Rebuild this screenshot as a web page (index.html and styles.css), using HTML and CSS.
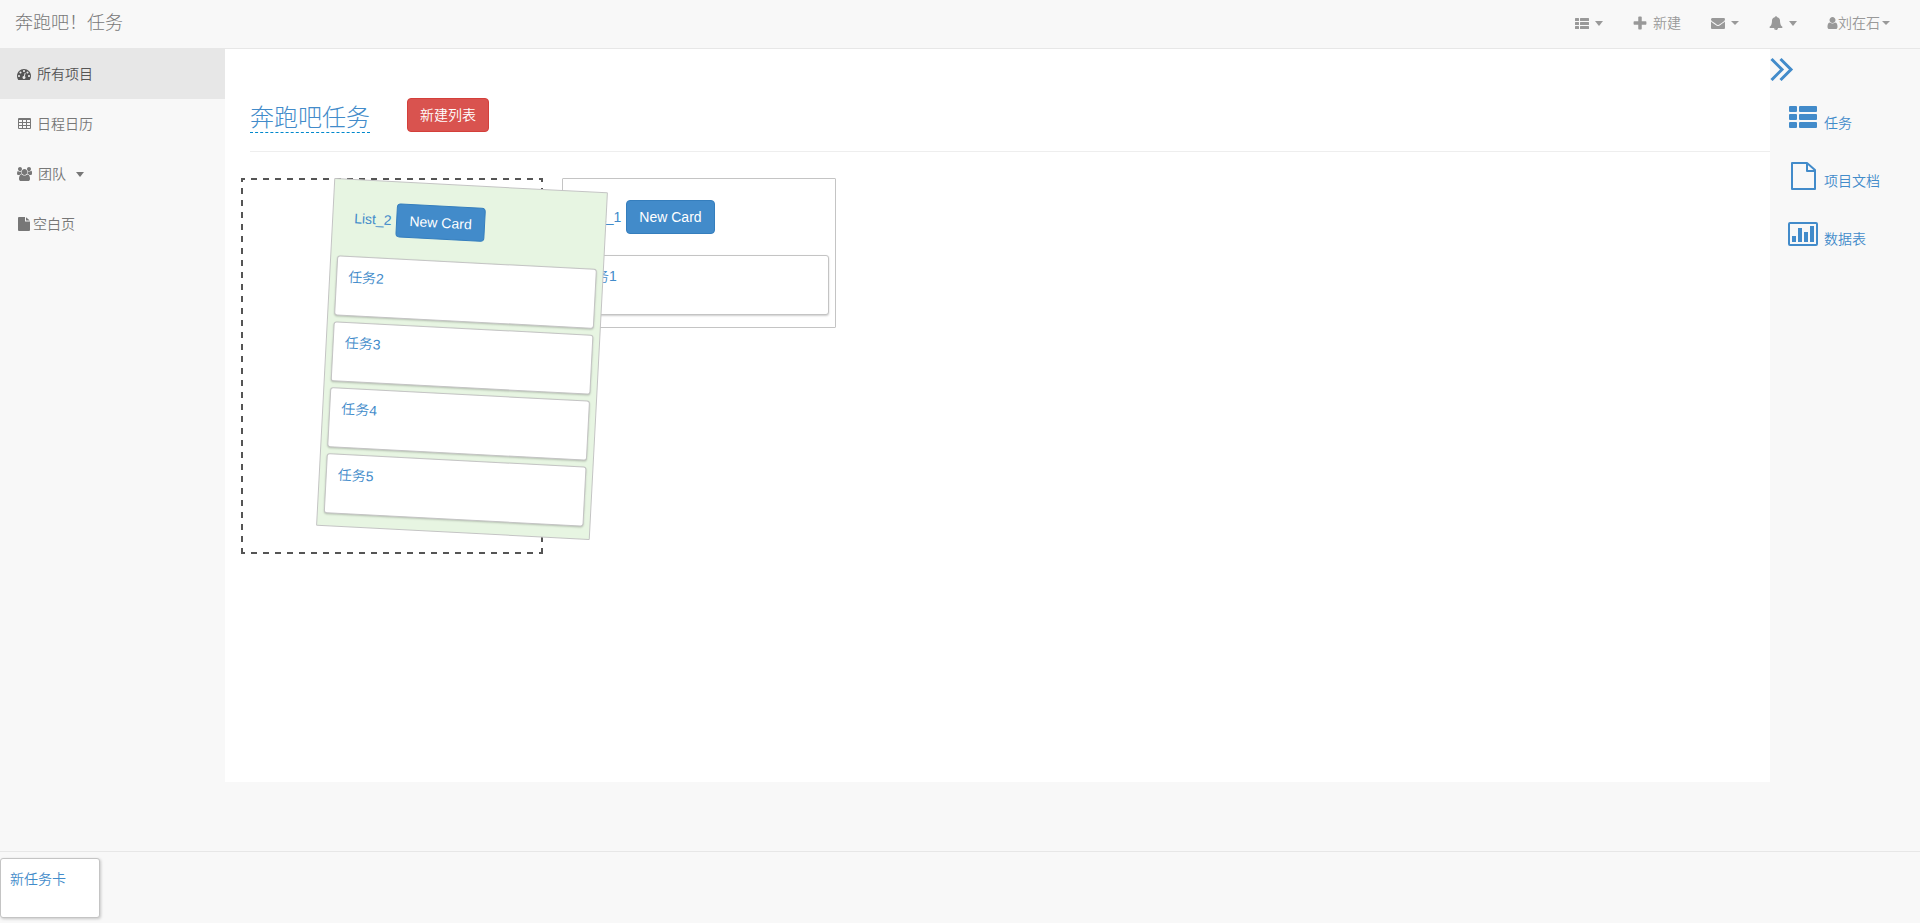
FILE: index.html
```html
<!DOCTYPE html>
<html lang="zh-CN">
<head>
<meta charset="utf-8">
<title>奔跑吧！任务</title>
<link rel="stylesheet" href="styles.css">
</head>
<body>
<svg class="sprite" aria-hidden="true">
  <symbol id="i-thlist" viewBox="0 0 28 22"><rect width="8" height="6" rx="1"/><rect x="10" width="18" height="6" rx="1"/><rect y="8" width="8" height="6" rx="1"/><rect x="10" y="8" width="18" height="6" rx="1"/><rect y="16" width="8" height="6" rx="1"/><rect x="10" y="16" width="18" height="6" rx="1"/></symbol>
  <symbol id="i-plus" viewBox="128 64 1536 1536"><path d="M1600 736v192q0 40-28 68t-68 28h-416v416q0 40-28 68t-68 28h-192q-40 0-68-28t-28-68v-416h-416q-40 0-68-28t-28-68v-192q0-40 28-68t68-28h416v-416q0-40 28-68t68-28h192q40 0 68 28t28 68v416h416q40 0 68 28t28 68z"/></symbol>
  <symbol id="i-mail" viewBox="0 0 1792 1792"><path d="M1792 710v794q0 66-47 113t-113 47h-1472q-66 0-113-47t-47-113v-794q44 49 101 87 362 246 497 345 57 42 92.500 65.500t94.500 48 110 24.500h2q51 0 110-24.500t94.500-48 92.500-65.500q170-123 498-345 57-39 100-87zm0-294q0 79-49 151t-122 123q-376 261-468 325-10 7-42.500 31t-54 38.500-52 32.500-57.500 27-50 9h-2q-23 0-50-9t-57.500-27-52-32.500-54-38.500-42.500-31q-91-64-262-182.500t-205-142.500q-62-42-117-115.500t-55-136.500q0-78 41.500-130t118.500-52h1472q65 0 112.500 47t47.500 113z"/></symbol>
  <symbol id="i-bell" viewBox="0 0 1792 1792"><path d="M912 1696q0-16-16-16-59 0-101.500-42.500t-42.500-101.500q0-16-16-16t-16 16q0 73 51.500 124.500t124.500 51.500q16 0 16-16zm816-288q0 52-38 90t-90 38h-448q0 106-75 181t-181 75-181-75-75-181h-448q-52 0-90-38t-38-90q50-42 91-88t85-119.500 74.500-158.500 50-206 19.500-260q0-152 117-282.500t307-158.500q-8-19-8-39 0-40 28-68t68-28 68 28 28 68q0 20-8 39 190 28 307 158.500t117 282.500q0 139 19.500 260t50 206 74.500 158.500 85 119.500 91 88z"/></symbol>
  <symbol id="i-user" viewBox="192 0 1408 1792"><path d="M1536 1399q0 109-62.500 187t-150.500 78h-854q-88 0-150.500-78t-62.500-187q0-85 8.500-160.500t31.500-152 58.500-131 94-89 134.500-34.500q131 128 313 128t313-128q76 0 134.500 34.500t94 89 58.500 131 31.500 152 8.500 160.500zm-256-887q0 159-112.500 271.500t-271.500 112.500-271.500-112.500-112.500-271.500 112.500-271.500 271.500-112.500 271.500 112.500 112.500 271.500z"/></symbol>
  <symbol id="i-dash" viewBox="0 0 1792 1792"><path d="M384 1152q0-53-37.500-90.500t-90.500-37.500-90.500 37.500-37.500 90.500 37.500 90.500 90.500 37.500 90.500-37.500 37.500-90.500zm192-448q0-53-37.500-90.500t-90.500-37.500-90.500 37.500-37.500 90.500 37.500 90.500 90.500 37.500 90.500-37.500 37.500-90.500zm428 481l101-382q6-26-7.500-48.500t-38.500-29.500-48 6.500-30 39.500l-101 382q-60 5-107 43.500t-63 98.500q-20 77 20 146t117 89 146-20 89-117q16-60-6-117t-72-91zm660-33q0-53-37.500-90.500t-90.500-37.500-90.500 37.500-37.500 90.500 37.500 90.500 90.500 37.500 90.500-37.500 37.500-90.500zm-640-640q0-53-37.500-90.500t-90.500-37.500-90.500 37.500-37.500 90.500 37.500 90.500 90.500 37.500 90.500-37.500 37.500-90.500zm448 192q0-53-37.500-90.500t-90.500-37.500-90.500 37.500-37.500 90.500 37.500 90.500 90.500 37.500 90.500-37.500 37.500-90.500zm320 448q0 261-141 483-19 29-54 29h-1402q-35 0-54-29-141-221-141-483 0-182 71-348t191-286 286-191 348-71 348 71 286 191 191 286 71 348z"/></symbol>
  <symbol id="i-table" viewBox="0 0 14 14"><path fill-rule="evenodd" d="M2 1h11q1 0 1 1v9q0 1-1 1H2q-1 0-1-1V2q0-1 1-1zM2 3v2h3V3zM6 3v2h3V3zM10 3v2h3V3zM2 6v2h3V6zM6 6v2h3V6zM10 6v2h3V6zM2 9v2h3V9zM6 9v2h3V9zM10 9v2h3V9z"/></symbol>
  <symbol id="i-users" viewBox="0 0 1920 1792"><path d="M593 896q-162 5-265 128h-134q-82 0-138-40.500t-56-118.500q0-353 124-353 6 0 43.500 21t97.500 42.500 119 21.500q67 0 133-23-5 37-5 66 0 159 93 293zm1071 637q0 120-73 189.500t-194 69.500h-874q-121 0-194-69.500t-73-189.500q0-53 3.500-103.500t14-109 26.500-108.500 43-97.500 62-81 85.500-53.500 111.500-20q10 0 43 21.500t73 48 107 48 135 21.500 135-21.500 107-48 73-48 43-21.500q61 0 111.500 20t85.500 53.500 62 81 43 97.500 26.500 108.500 14 109 3.500 103.500zm-1024-1277q0 106-75 181t-181 75-181-75-75-181 75-181 181-75 181 75 75 181zm704 384q0 159-112.500 271.500t-271.500 112.500-271.500-112.500-112.500-271.500 112.500-271.500 271.500-112.500 271.500 112.500 112.500 271.500zm576 225q0 78-56 118.500t-138 40.500h-134q-103-123-265-128 93-134 93-293 0-29-5-66 66 23 133 23 59 0 119-21.500t97.500-42.500 43.500-21q124 0 124 353zm-128-609q0 106-75 181t-181 75-181-75-75-181 75-181 181-75 181 75 75 181z"/></symbol>
  <symbol id="i-file" viewBox="0 0 14 14"><path d="M2 0H8V4.500H13V13q0 1-1 1H2q-1 0-1-1V1q0-1 1-1zM9 0.200L12.800 3.500H9z"/></symbol>
  <symbol id="i-doc" viewBox="0 0 28 28"><path fill="none" stroke="currentColor" stroke-width="2" stroke-linejoin="round" d="M4 1H18L26 8V27H3V1zM18 1V9H26"/></symbol>
  <symbol id="i-chart" viewBox="0 0 30 24"><rect x="1" y="1" width="28" height="22" rx="1" fill="none" stroke="currentColor" stroke-width="2"/><path d="M4 14h4v6H4zM10 6h4v14h-4zM16 10h4v10h-4zM22 4h4v16h-4z"/></symbol>
  <symbol id="i-chev" viewBox="0 0 24 24"><path fill="none" stroke="currentColor" stroke-width="3" d="M1.500 2L12 12.500L1.500 23M10.500 2L21 12.500L10.500 23"/></symbol>
</svg>

<header class="topbar">
  <a class="brand" href="#">奔跑吧！任务</a>
  <nav class="tools">
    <a href="#" aria-label="列表"><svg class="icon icon-th"><use href="#i-thlist"/></svg><i class="caret caret-lg"></i></a>
    <a href="#"><svg class="icon"><use href="#i-plus"/></svg>新建</a>
    <a href="#" aria-label="消息"><svg class="icon"><use href="#i-mail"/></svg><i class="caret"></i></a>
    <a href="#" aria-label="通知"><svg class="icon"><use href="#i-bell"/></svg><i class="caret caret-lg"></i></a>
    <a class="account" href="#"><svg class="icon icon-user"><use href="#i-user"/></svg>刘在石<i class="caret"></i></a>
  </nav>
</header>

<div class="layout">
  <nav class="sidebar">
    <a class="active" href="#"><svg class="icon"><use href="#i-dash"/></svg>所有项目</a>
    <a href="#"><svg class="icon"><use href="#i-table"/></svg>日程日历</a>
    <a href="#"><svg class="icon icon-users"><use href="#i-users"/></svg>团队<i class="caret caret-lg"></i></a>
    <a class="tight" href="#"><svg class="icon"><use href="#i-file"/></svg>空白页</a>
  </nav>

  <main class="content">
    <div class="page-head">
      <h1 class="title"><a href="#">奔跑吧任务</a></h1>
      <button class="btn btn-danger" type="button">新建列表</button>
    </div>
    <div class="board">
      <div class="slot">
        <section class="list dragging">
          <div class="list-head"><a href="#">List_2</a><button class="btn btn-primary" type="button">New Card</button></div>
          <a class="card" href="#">任务2</a>
          <a class="card" href="#">任务3</a>
          <a class="card" href="#">任务4</a>
          <a class="card" href="#">任务5</a>
        </section>
      </div>
      <section class="list">
        <div class="list-head"><a href="#">List_1</a><button class="btn btn-primary" type="button">New Card</button></div>
        <a class="card" href="#">任务1</a>
      </section>
    </div>
  </main>

  <aside class="panel">
    <a class="collapse" href="#" aria-label="收起"><svg><use href="#i-chev"/></svg></a>
    <a class="panel-link" href="#"><svg class="p-list"><use href="#i-thlist"/></svg>任务</a>
    <a class="panel-link" href="#"><svg class="p-doc"><use href="#i-doc"/></svg>项目文档</a>
    <a class="panel-link" href="#"><svg class="p-chart"><use href="#i-chart"/></svg>数据表</a>
  </aside>
</div>

<footer class="dock">
  <a class="card" href="#">新任务卡</a>
</footer>
</body>
</html>
```
FILE: styles.css
```css
* { box-sizing: border-box; }

body {
  margin: 0;
  min-height: 100vh;
  display: flex;
  flex-direction: column;
  background: #f8f8f8;
  color: #333;
  font-family: "Liberation Sans", "Noto Sans CJK SC", sans-serif;
  font-size: 14px;
  font-weight: 350;
  line-height: 20px;
}

a { color: #428bca; text-decoration: none; }
svg { fill: currentColor; flex: none; }
.sprite { position: absolute; width: 0; height: 0; }
.icon { width: 14px; height: 14px; }

.caret {
  border-top: 4px solid currentColor;
  border-left: 4px solid transparent;
  border-right: 4px solid transparent;
}
.caret-lg { border-top-width: 5px; }

/* Top bar */
.topbar {
  display: flex;
  justify-content: space-between;
  align-items: center;
  height: 49px;
  padding: 0 15px 2px;
  border-bottom: 1px solid #e7e7e7;
}
.brand { color: #777; font-size: 18px; font-weight: 300; }
.tools { display: flex; }
.tools a {
  display: flex;
  align-items: center;
  gap: 6px;
  padding: 13px 15px;
  color: #999;
}
.tools .icon-th { height: 11px; }
.tools .icon-user { width: 11px; }
.tools .account { gap: 0; }
.account .caret { margin-left: 2px; }

/* Three-column body */
.layout { display: flex; flex: 1; align-items: flex-start; }

.sidebar { width: 225px; flex: none; }
.sidebar a {
  display: flex;
  align-items: center;
  gap: 6px;
  height: 50px;
  padding: 0 17px;
  color: #777;
}
.sidebar .active { background: #e7e7e7; color: #555; }
.sidebar .icon-users { width: 15px; }
.sidebar .caret { margin-left: 4px; }
.sidebar .tight { gap: 2px; }

.content {
  flex: 1;
  min-height: calc(100vh - 190px);
  padding: 49px 0 0 16px;
  background: #fff;
}
.page-head {
  display: flex;
  align-items: flex-start;
  gap: 37px;
  margin-left: 9px;
  padding-bottom: 18px;
  border-bottom: 1px solid #eee;
}
.title {
  margin: 0;
  padding-top: 6px;
  font-size: 24px;
  font-weight: 300;
  line-height: 28px;
}
.title a { display: block; border-bottom: 1px dashed #08c; }

.btn {
  padding: 6px 12px;
  border: 1px solid;
  border-radius: 4px;
  color: #fff;
  font: inherit;
}
.btn-danger { background: #d9534f; border-color: #d43f3a; }
.btn-primary { background: #428bca; border-color: #357ebd; }

/* Board */
.board {
  display: flex;
  align-items: flex-start;
  gap: 19px;
  margin-top: 26px;
}
/* Drop target: 6px dashes with 6px gaps on all four sides */
.slot {
  --dash-x: repeating-linear-gradient(90deg, #555 0 4px, transparent 4px 10px, #555 10px 12px);
  --dash-y: repeating-linear-gradient(180deg, #555 0 4px, transparent 4px 10px, #555 10px 12px);
  position: relative;
  width: 302px;
  height: 376px;
  padding: 7px 84px;
  background:
    var(--dash-x) top / 100% 2px no-repeat,
    var(--dash-x) bottom / 100% 2px no-repeat,
    var(--dash-y) left / 2px 100% no-repeat,
    var(--dash-y) right / 2px 100% no-repeat;
}
.list {
  width: 274px;
  display: flex;
  flex-direction: column;
  gap: 6px;
  padding: 21px 6px 12px;
  background: #fff;
  border: 1px solid #c4c4c4;
  border-radius: 1px;
}
.dragging {
  position: absolute;
  left: 84px;
  top: 7px;
  background: #e7f5e2;
  transform: rotate(3deg);
}
.list-head {
  display: flex;
  align-items: center;
  gap: 5px;
  padding: 0 15px 15px;
}
.card {
  height: 60px;
  padding: 10px 11px;
  background: #fff;
  border: 1px solid #c4c4c4;
  border-radius: 3px;
  box-shadow: 0 1px 2px rgba(0, 0, 0, 0.2);
}

/* Right panel */
.panel {
  width: 150px;
  flex: none;
  display: flex;
  flex-direction: column;
  gap: 26px;
  padding-top: 8px;
}
.collapse { display: flex; height: 18px; }
.collapse svg { width: 24px; height: 24px; }
.panel-link {
  display: flex;
  align-items: flex-end;
  height: 32px;
  gap: 6px;
  padding-left: 18px;
}
.panel-link svg { width: 30px; height: 24px; margin-bottom: 3px; }
.panel-link .p-list { height: 22px; margin-bottom: 5px; }
.panel-link .p-doc { height: 28px; margin-bottom: 1px; }

/* Bottom dock */
.dock {
  height: 72px;
  padding-top: 6px;
  border-top: 1px solid #e7e7e7;
}
.dock .card {
  display: block;
  width: 100px;
  padding: 10px 9px;
  box-shadow: 1px 1px 3px rgba(0, 0, 0, 0.2);
}
```
